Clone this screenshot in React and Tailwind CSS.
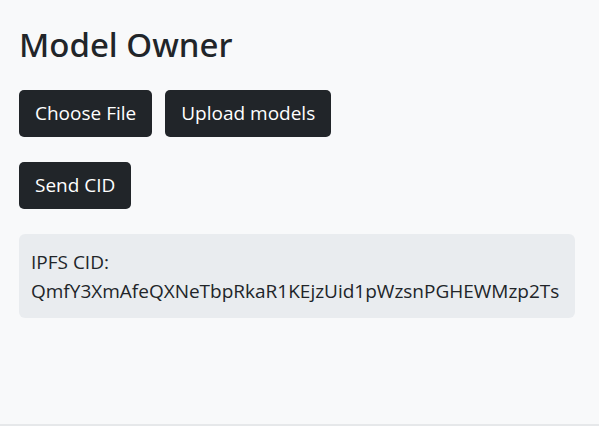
export default function App() {
  return (
    <div className="h-[426px] bg-[#f8f9fa] font-['Open_Sans',sans-serif] text-[#212529] border-b-2 border-[#e6e8ea]">
      <div className="pl-[19px] pr-[24px] pt-[22px]">
        <h1 className="font-['Noto_Sans',sans-serif] text-[33px] font-medium leading-[46px] mb-[22px]">
          Model Owner
        </h1>
        <div className="flex gap-[13px] mb-[25px]">
          <button className="h-[47px] px-[16px] rounded-[5px] bg-[#212529] text-white text-[19px]">
            Choose File
          </button>
          <button className="h-[47px] px-[16px] rounded-[5px] bg-[#212529] text-white text-[19px]">
            Upload models
          </button>
        </div>
        <div className="mb-[25px]">
          <button className="h-[47px] px-[16px] rounded-[5px] bg-[#212529] text-white text-[19px]">
            Send CID
          </button>
        </div>
        <div className="rounded-[6px] bg-[#e9ecef] px-[12px] pt-[14px] pb-[12px] text-[19px] leading-[29px]">
          <p>IPFS CID:</p>
          <p>QmfY3XmAfeQXNeTbpRkaR1KEjzUid1pWzsnPGHEWMzp2Ts</p>
        </div>
      </div>
    </div>
  );
}
